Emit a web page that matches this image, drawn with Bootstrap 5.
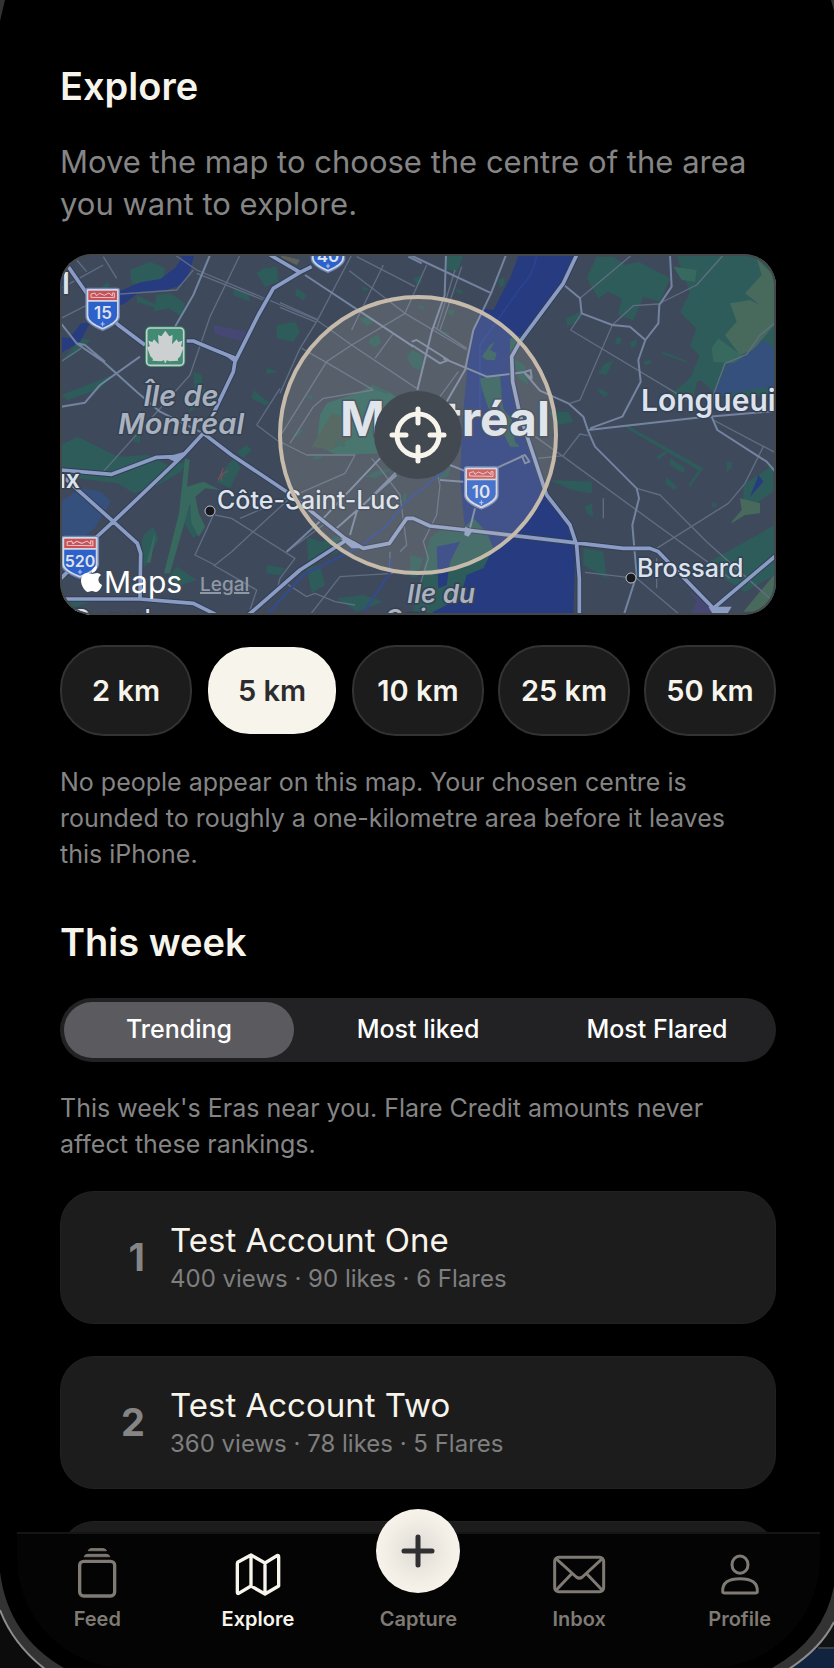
<!DOCTYPE html>
<html lang="en" data-bs-theme="dark">
<head>
<meta charset="utf-8">
<meta name="viewport" content="width=device-width, initial-scale=1">
<title>Explore</title>
<link rel="stylesheet" href="https://cdn.jsdelivr.net/npm/bootstrap@5.3.0/dist/css/bootstrap.min.css">
<script src="https://cdn.jsdelivr.net/npm/bootstrap@5.3.0/dist/js/bootstrap.bundle.min.js"></script>
<style>
  :root { --cream: #f7f4ec; --muted: #858585; --panel: #1c1c1c; --line: #333; }
  body { background: #000; color: var(--cream); font-family: Inter, "Noto Sans", sans-serif; }
  .feed-area { padding: 62px 58px 0 60px; min-height: 0; }
  .title { font-size: 38px; line-height: 48px; font-weight: 600; color: var(--cream); }
  .week { margin-top: 46px; }
  .intro { font-size: 31px; line-height: 42px; color: var(--muted); margin: 31px 0 29px; }
  .note { font-size: 25px; line-height: 36px; color: var(--muted); }
  .map-frame { border-radius: 32px; }
  .map-frame svg { width: 100%; height: auto; }
  .map-frame::after { content: ""; position: absolute; inset: 0; border: 2px solid #45484b; border-radius: 32px; pointer-events: none; }
  .chips { gap: 14px; margin: 30px 0 28px; }
  .chip { flex: 1 1 0; height: 91px; padding: 0; border: 2px solid var(--line); border-radius: 44px; background: var(--panel); color: var(--cream); font-size: 29px; font-weight: 600; }
  .chip.active { background: var(--cream); color: #2c2c2e; border-color: #000; }
  .segments { height: 64px; padding: 4px; gap: 9px; border-radius: 32px; background: #222224; margin: 32px 0 28px; }
  .segment { flex: 1 1 0; border: 0; border-radius: 28px; background: transparent; color: #fff; font-size: 25px; font-weight: 500; }
  .segment.active { background: #5b5b5f; }
  .ranking { gap: 32px; margin-top: 29px; }
  .entry { height: 133px; border-radius: 34px; background: var(--panel); border: 1px solid #212121; gap: 25px; flex-shrink: 0; }
  .rank { width: 84px; text-align: right; font-size: 38px; font-weight: 700; color: var(--muted); }
  .entry-name { font-size: 33px; line-height: 42px; }
  .entry-stats { font-size: 24px; line-height: 36px; color: #7f7f7f; }
  .tabs { height: 136px; margin: 0 14px 0 17px; padding-top: 8px; background: #040404; border-top: 2px solid #151515; border-radius: 0 0 110px 110px; }
  .tab-link { flex: 1 1 0; color: #7f7a73; font-size: 20px; line-height: 24px; font-weight: 600; }
  .tab-link.active { color: var(--cream); }
  .tab-link svg { width: 60px; height: 60px; margin-bottom: 5px; fill: none; stroke: currentColor; stroke-linecap: round; stroke-linejoin: round; }
  .capture { width: 84px; height: 84px; margin: -33px 0 14px; border-radius: 50%; background: radial-gradient(circle, #dfdcd5 0, #f3efe7 55%, #f8f3eb 75%); }
  .tab-link .capture svg { width: 84px; height: 84px; margin: 0; stroke: #303032; }
  .bezel { position: absolute; pointer-events: none; }
</style>
</head>
<body>
<div class="vh-100 d-flex flex-column overflow-hidden position-relative">
  <main class="feed-area flex-grow-1 overflow-hidden d-flex flex-column">
    <h1 class="title mb-0">Explore</h1>
    <p class="intro">Move the map to choose the centre of the area<br>you want to explore.</p>

    <div class="map-frame position-relative overflow-hidden flex-shrink-0">
      <svg class="d-block" viewBox="60 254 716 361" role="img" aria-label="Map of Montréal">
        <defs>
          <g id="shield">
            <path d="M-50 -58q0-6 6-6H44q6 0 6 6V20Q50 42 0 62Q-50 42-50 20Z" fill="#d3d5dc" stroke="#6c87bd" stroke-width="4"/>
            <path d="M-43 -24H43V18Q43 36 0 54Q-43 36-43 18Z" fill="#2d61cc"/>
            <path d="M-43 -57H43V-29H-43Z" fill="#c85056"/>
            <path d="M-35 -37v-10l12-3 4 8 10-7 14 6 14-7 10 9V-50h6v14Z" fill="none" stroke="#e5c8cb" stroke-width="3"/>
            <path d="M0 36v14M-6 43H6" stroke="#b6c9f0" stroke-width="3"/>
          </g>
        </defs>
        <rect x="60" y="254" width="716" height="361" fill="#3e4a5b"/>
        <g transform="translate(50 245) scale(.333333)">
          <!-- parks and green areas, west side -->
          <g fill="#2d5c5b">
            <path d="M240 75l60-25 45 20-5 35-50 15-45-5ZM320 150l40-5 45 30-10 40-40-25-45 10ZM640 70l40-5 5 45-40 15-25-40ZM680 240l55-10 15 30-20 30-50-10ZM33 600l50-25 120 60 90-5 60 30 60-10-20 30-70 40-70 25-50-30-120-15-50-5ZM430 380l25 10 5 40 45 20-10 40-40-15-40 30 20-60ZM540 650l20-10 10 30-30 60-40-20ZM120 170l50-60 10 10-50 70ZM610 435l50 40-15 5-40-20ZM650 370l35 10-35 8ZM560 620l30-20 15 15-25 25ZM33 350l60-70 30 5-60 50ZM33 450l80-30 70-30-30 40-100 35ZM280 870l30-25 15 35-35 80-30 15ZM400 790l40 0 10 70-20 20-30-50ZM770 970l40-10 15 60-40 25ZM380 965l60 40-45 15-40-20ZM650 960l55 10-15 20-40-5ZM740 130l30 20-10 15-25-15ZM550 130l45 20 5 20-50-20ZM250 570l20 0 0 25-20-5ZM33 1080l60-30 30 20-60 20ZM860 1060l80-10 60 20-80 30ZM260 150l50 25 10 15-60-20Z"/>
          </g>
          <path d="M405 640l14 5-8 80 50-15 50 25-45-5-30 25 10 50 20 40-20 30-22-40-4-60-60 210-18 0 45-180ZM290 950l22-80 4 5-15 80Z" fill="#37695f"/>
          <path d="M33 770l60-40 60 10 30 30-50 80-35 30-65-10Z" fill="#36507e"/>
          <path d="M385 32H432l-10 40-20 45-60 20-75 5-45 35-20 5v-40l70-30 60-10 45-35 20-30ZM120 235l-30 55-57 35V275l25 5 35-45Z" fill="#263b80"/>
          <path d="M490 240l100 20-15 28-80-20Z" fill="#464873"/>
          <path d="M690 30l60 15-10 15-45-22Z" fill="#5e6259"/>
          <path d="M520 670l-15 35M535 680q-25 0-20 28" stroke="#735058" stroke-width="4" fill="none"/>
          <!-- Mount Royal and central parks -->
          <path d="M810 510l20-35 100-35 40-20 45 20 95 60v60l-90 30-30 35-130 5-60-30Z" fill="#2f6560"/>
          <path d="M785 605l60-100 50 15 10 60-60 35Z" fill="#3f5753"/>
          <g transform="translate(690 15)" fill="#2d5c5b">
            <path d="M235 205l35-5 10 18-20 10ZM270 265l25-12 10 25-20 15-20-15ZM395 300l35 15-5 45-25-5-20-30ZM480 240l30 10-5 8-25-10ZM505 180l18 0-3 18-15-5ZM530 115l20 10-8 8-15-10ZM415 165l20 5-5 8-15-6ZM245 110l20 5-5 8-15-5ZM400 85l20-8 5 20-15 12ZM655 90l15-8 5 20-15 12ZM280 405l45 20 0 8-45-15ZM80 435l20 5-5 8-15-6ZM40 555l25-18 5 5-20 20Z"/>
            <path d="M170 570l25 10 0 10-35-5ZM105 615l30-5-10 15-30 5ZM255 680l40-20 50-5-60 30ZM460 670l35-5 20-20-10 35-30 10ZM370 735l10-10 0 30-15 0ZM80 860l45 15 60-20-10 50-90 30Z"/>
          </g>

          <g transform="translate(1080 0)">
            <path d="M325 32H500L440 135 330 290 305 330 308 410 335 520 355 570 400 710 412 770 477 830 497 890 490 1115H50L75 1010 70 890 120 860 165 850 150 700 160 500 175 340 195 240 215 190 250 195 300 100Z" fill="#263b80"/>
            <path d="M380 32Q370 90 330 130L210 300V500" fill="none" stroke="#284492" stroke-width="5"/>
            <g fill="#2d5c5b">
              <path d="M530 100l30-65 50 0 35 25 40-10 95 50-30 70-50-15-30 70-45-15 10-50-40-20-30 20ZM800 32h300v420h-180l-60-60 40-30-60-60 20-50-50-50 30-60ZM870 330l60-20 10 70-80 30-10 60-70-20 60-50ZM110 32h50l-20 50-30-10ZM60 880l30-25 60 5 40-40 40 40 20 50-30 60-50 20-20 70-80 40-30 60-30-60ZM520 910l60 10 10 80-70-40ZM210 400l60-10 5 50-15 60-25-10-20-60ZM240 300l15-10-15 25 20 10-5 20-25 0-15-10ZM420 705l125 5v35l-60-10ZM1000 720l90-60v80l-90 60ZM880 960l215-120v150l-90 50ZM0 930l40 10-20 60-20-5ZM415 500l60 0 15 30-45 10ZM470 220l40-20 0 25-40 20Z"/>
              <path d="M580 360l30-15-20 45-25-5ZM620 275l15 5-5 20-15-5ZM660 295l20-15 0 20-15 10ZM755 318l75 30 0 5-70-25ZM740 635l30-20 0 10-25 20ZM780 640l45 30-5 15-40-25ZM770 695l30 30-5 10-30-20ZM905 775l15 0 0 12-15-2ZM950 650l15 0 0 20-15 10ZM700 350l20-5 5 10-20 5ZM565 430l30 15-10 10-20-15ZM525 785l20-10 5 40-20-10Z"/>
              <path d="M650 540l230 130-40 55 30 40-35-45 30-45-215-125Z"/>
              <path d="M300 280l40-10-10 30-30 25ZM310 340l35 20 10 60-30-20ZM285 500l20 20 10 70 15 15-30 0-20-40ZM270 420l10 70 15 30-20-5-10-60Z"/>
            </g>
            <path d="M80 905l70-15-30 60-10 70-25 10Z" fill="#263b80"/>
            <path d="M1040 40l60 60v130l-70 85-40 15-45-60 35-40-20-55 60-10 30 15-45-35 50-55ZM1000 1100l100-120v120ZM965 830l30-35-5-35 60 15 0 30-45 5-40 25Z" fill="#486a5c"/>
            <path d="M950 360l60-30 50-45 40 30v110l-80 10-110 20Z" fill="#36507e"/>
            <path d="M790 65l70 10-5 35-40-5ZM905 310l20-30 75 55-30 20-60-5Z" fill="#37695f"/>
            <path d="M810 1000l30 40 80 50v20h-80l20-40Z" fill="#464873"/>
            <path d="M1045 690l15 20-40 45 20-50Z" fill="#263b80"/>
          </g>

          <!-- minor streets -->
          <g fill="none" stroke="#606d83" stroke-width="4" stroke-linejoin="round">
            <path d="M375 30L440 75 800 225M440 85L640 165M570 30L480 215 420 390 160 680M33 220L170 150 380 135 430 75M80 45l30 35M160 35l40 65M33 350l60-40M33 130L160 60M620 540l60 45 90 45H915L885 685 725 755M620 540L690 430M720 755L570 820M490 810L435 930l60 30 50-40 130-120 50-45M495 810l50 10 190 120-45 60-10 40M490 960l130 75-20 60M700 1010l70 45 25-10 60 25 60 10M820 840L710 920M780 1110l90-115 160-10"/>
            <g transform="translate(690 15)">
              <path d="M0 158L112 208M0 172L110 217M215 15L110 215 60 295 0 430M310 45L215 240M440 45L375 190 215 285 140 335 0 560M65 295L135 335 280 420M208 62L375 190 560 300M110 210L215 285 410 415M340 250L285 325M280 420L130 445 100 470 30 580M230 20L405 110M525 60L470 240M460 230L560 295M545 50L480 240M535 365L480 440"/>
            </g>
            <path d="M965 640l25 30 60 80 20 150-20 20M1160 680l10 40-10 90-40 80 15 50-25 80M1020 920v70"/>
          </g>
          <g transform="translate(1080 0)" fill="none" stroke="#606d83" stroke-width="4" stroke-linejoin="round">
            <path d="M515 205L482 255 850 475M665 30L510 160M607 240L510 465 480 475M607 240L670 182 745 177 860 120 940 30M1100 230L1050 270 1010 328 945 355 910 450 905 515M320 535L460 635 960 1000M385 640L460 632 510 567 535 572M680 730l70 20 140 140 200 180M740 910L955 775 1005 715 1060 605M910 525L1100 625M525 982L680 1000 810 1110M740 940v90M580 820v-60"/>
          </g>

          <!-- secondary roads -->
          <g fill="none" stroke="#74839f" stroke-width="6" stroke-linejoin="round">
            <path d="M480 30L430 150 375 245M33 485L105 473 150 420 270 335M33 235L80 295 160 350 260 440 330 500 460 565M80 295l25 5 60 50M765 90L1090 305M1075 35l40 20M990 640L820 820 710 920M1040 690L860 850 M900 870l20-70 140-140"/>
            <g transform="translate(1080 0)">
              <path d="M108 30L104 150 65 260 22 435M288 30L243 145 190 255 165 375 110 470M0 30L245 145M462 120L510 160 515 205 607 240 660 245 706 285 745 235 748 180 785 125 780 30M706 285L685 345 692 410 637 515 540 550M5 290L20 285 115 345 90 355 5 300M100 340L230 395 340 382 362 375 365 400 345 385 390 437 475 475 520 515 535 560 555 605 680 730 687 760 667 840 680 990 643 1105M535 555L860 518 1100 498M905 515L922 555 1070 650 1100 685M195 790L180 850M225 685L345 630 358 650 345 655 335 630M90 705L160 710M120 660l50 20"/>
            </g>
          </g>

          <!-- canal -->
          <path d="M650 1110L760 990 930 905 1000 850 1080 760 1180 680M1022 940v40l-80 120" fill="none" stroke="#344a8b" stroke-width="7"/>

          <!-- motorways -->
          <g fill="none" stroke="#323e55" stroke-width="17" stroke-linejoin="round">
            <path d="M55 65L110 145 205 240 285 300M410 288H430L555 340M785 65L750 82 670 130 625 210 555 350 550 380 500 485 460 565 400 630 190 830 130 885M660 30L750 82M33 675L185 688 320 637 375 635M45 700L190 830 262 895 272 925 270 1060M33 1062H270L430 1075 500 1110M460 565L545 630 710 740 885 880 940 910 1018 895 1070 820H1090L1140 843 1250 855 1720 910H1800L1825 920 1990 1090 2180 930M890 885L750 975 595 1110M33 1000l80-80M1580 30L1540 115 1410 290 1385 335 1388 410 1410 510 1490 750 1560 840 1580 900 1588 1000 1588 1110"/>
          </g>
          <g fill="none" stroke="#8b9cc4" stroke-width="11" stroke-linejoin="round">
            <path d="M55 65L110 145 205 240 285 300M410 288H430L555 340M785 65L750 82 670 130 625 210 555 350 550 380 500 485 460 565 400 630 190 830 130 885M660 30L750 82M33 675L185 688 320 637 375 635M45 700L190 830 262 895 272 925 270 1060M33 1062H270L430 1075 500 1110M460 565L545 630 710 740 885 880 940 910 1018 895 1070 820H1090L1140 843 1250 855 1720 910H1800L1825 920 1990 1090 2180 930M890 885L750 975 595 1110M33 1000l80-80M1580 30L1540 115 1410 290 1385 335 1388 410 1410 510 1490 750 1560 840 1580 900 1588 1000 1588 1110"/>
          </g>
          <path d="M345 637L405 620 375 650M500 312L560 335 550 350ZM1245 845l25 10-15 20-12-5ZM870 880l45 10 30 20-40 0ZM1975 1085h70l-15 25h-40Z" fill="#8b9cc4"/>

          <use href="#shield" transform="translate(158 194)"/>
          <use href="#shield" transform="translate(834 20)"/>
          <use href="#shield" transform="translate(90 938) scale(1.1 1)"/>
          <use href="#shield" transform="translate(1294 730)"/>

          <rect x="285" y="244" width="121" height="122" rx="15" fill="#2f8064"/>
          <rect x="290" y="249" width="111" height="112" rx="11" fill="#418a73" stroke="#c5d0cd" stroke-width="5"/>
          <path d="M346 257l12 17 10-4-2 28 14-15 5 8 12-4-4 17 8 3-10 27-8 8 2 5-26 2-9-3-2 6h-4l-2-6-9 3-26-2 2-5-8-8-10-27 8-3-4-17 12 4 5-8 14 15-2-28 10 4ZM344 335h4v18h-4Z" fill="#ccd0d0"/>
        </g>

        <g text-anchor="middle" font-weight="600" font-size="17" fill="#dfe2ea">
          <text x="103" y="319">15</text>
          <text x="328" y="262">40</text>
          <text x="80" y="567" font-size="16">520</text>
          <text x="481" y="498">10</text>
        </g>
        <g fill="#dce3ee" stroke="#354153" stroke-width="3" paint-order="stroke" stroke-linejoin="round">
          <text x="445" y="436" font-size="48" font-weight="700" text-anchor="middle">Montréal</text>
          <text x="641" y="411" font-size="30" font-weight="600">Longueui</text>
          <g font-size="25" font-weight="500">
            <text x="217" y="509">Côte-Saint-Luc</text>
            <text x="637" y="577">Brossard</text>
            <text x="80" y="488" text-anchor="end" font-weight="600">ux</text>
            <text x="73" y="628">Dorval</text>
          </g>
          <text x="62" y="294" font-size="30" font-weight="600">l</text>
          <g font-style="italic" font-weight="600" fill="#a9b2be" text-anchor="middle">
            <text x="181" y="406" font-size="29">Île de</text>
            <text x="181" y="434" font-size="29">Montréal</text>
            <text x="441" y="603" font-size="26">Ile du</text>
            <text x="405" y="628" font-size="26">Sai</text>
          </g>
        </g>
        <g fill="#18191d" stroke="#b9c2ce" stroke-width="1">
          <circle cx="210" cy="511" r="5"/>
          <circle cx="631" cy="578" r="5"/>
        </g>

        <!-- search radius and centre marker -->
        <circle cx="418" cy="435" r="138" fill="#fff0d8" fill-opacity=".13" stroke="#c6baab" stroke-width="4"/>
        <circle cx="418" cy="435" r="44" fill="#434951"/>
        <g fill="none" stroke="#f7f4ec" stroke-width="5" stroke-linecap="round">
          <circle cx="418" cy="435" r="21"/>
          <path d="M418 409v14M418 447v14M392 435h14M430 435h14"/>
        </g>

        <path d="M92 574c2 0 3-1 5-1 2 0 3 1 4 2-4 3-3 8 1 10-1 4-4 7-6 7-2 0-2-1-4-1-2 0-3 1-4 1-3 0-7-7-7-11 0-5 3-8 6-8 2 0 3 1 5 1ZM92 573c0-4 2-6 5-7 0 4-2 6-5 7Z" fill="#fff"/>
        <text x="104" y="593" font-size="30" font-weight="400" fill="#fff">Maps</text>
        <a href="#legal"><text x="200" y="591" font-size="19" font-weight="500" fill="#8f98a5" text-decoration="underline">Legal</text></a>
      </svg>
    </div>

    <div class="chips d-flex flex-shrink-0" role="group" aria-label="Radius">
      <button type="button" class="chip">2 km</button>
      <button type="button" class="chip active" aria-pressed="true">5 km</button>
      <button type="button" class="chip">10 km</button>
      <button type="button" class="chip">25 km</button>
      <button type="button" class="chip">50 km</button>
    </div>
    <p class="note mb-0">No people appear on this map. Your chosen centre is<br>rounded to roughly a one-kilometre area before it leaves<br>this iPhone.</p>

    <h2 class="title week mb-0">This week</h2>
    <div class="segments d-flex flex-shrink-0" role="group" aria-label="Ranking">
      <button type="button" class="segment active" aria-pressed="true">Trending</button>
      <button type="button" class="segment">Most liked</button>
      <button type="button" class="segment">Most Flared</button>
    </div>
    <p class="note mb-0">This week's Eras near you. Flare Credit amounts never<br>affect these rankings.</p>

    <div class="ranking d-flex flex-column">
      <article class="entry d-flex align-items-center">
        <div class="rank">1</div>
        <div><div class="entry-name">Test Account One</div><div class="entry-stats">400 views · 90 likes · 6 Flares</div></div>
      </article>
      <article class="entry d-flex align-items-center">
        <div class="rank">2</div>
        <div><div class="entry-name">Test Account Two</div><div class="entry-stats">360 views · 78 likes · 5 Flares</div></div>
      </article>
      <article class="entry"></article>
    </div>
  </main>

  <nav class="tabs d-flex flex-shrink-0 position-relative" aria-label="Main">
    <a href="#feed" class="tab-link d-flex flex-column align-items-center text-decoration-none">
      <svg viewBox="0 0 180 180" stroke-width="10"><rect x="38" y="58" width="105" height="104" rx="12"/><path d="M52 43q2-6 10-6h56q8 0 10 6ZM64 25q2-5 8-5h36q8 0 10 5Z" fill="currentColor" stroke-width="3"/></svg>
      Feed
    </a>
    <a href="#explore" class="tab-link active d-flex flex-column align-items-center text-decoration-none" aria-current="page">
      <svg viewBox="0 0 180 180" stroke-width="10"><path d="M29 61L69 39 111 63 147 41Q152 39 152 45V132L111 156 69 132 32 154Q28 156 28 150V65ZM69 39V132M111 63V156"/></svg>
      Explore
    </a>
    <a href="#capture" class="tab-link d-flex flex-column align-items-center text-decoration-none">
      <span class="capture d-block"><svg class="d-block" viewBox="0 0 84 84" stroke-width="5"><path d="M42 28v28M28 42h28"/></svg></span>
      Capture
    </a>
    <a href="#inbox" class="tab-link d-flex flex-column align-items-center text-decoration-none">
      <svg viewBox="0 0 180 180" stroke-width="9"><rect x="17" y="46" width="147" height="103" rx="12"/><path d="M21 50L82 105Q91 112 100 105L160 50M21 145L68 95M160 145L113 95"/></svg>
      Inbox
    </a>
    <a href="#profile" class="tab-link d-flex flex-column align-items-center text-decoration-none">
      <svg viewBox="0 0 180 180" stroke-width="9"><ellipse cx="90" cy="68" rx="24" ry="26"/><path d="M38 148Q37 110 90 110T142 148Q142 153 136 153H44Q38 153 38 148Z"/></svg>
      Profile
    </a>
  </nav>

  <!-- rounded edges of the device -->
  <svg class="bezel top-0 start-0" width="6" height="22" aria-hidden="true"><path d="M0 0H5L0 21Z" fill="#333"/></svg>
  <svg class="bezel top-0 end-0" width="4" height="12" aria-hidden="true"><path d="M4 0H1L4 11Z" fill="#333"/></svg>
  <svg class="bezel bottom-0 start-0" width="66" height="100" viewBox="0 0 66 100" aria-hidden="true"><path d="M0 4Q8 68 64 100H0Z" fill="#333"/><path d="M0 42Q13 76 45 100H0Z" fill="#0c0c0c"/><path d="M0 42Q13 76 45 101" fill="none" stroke="#8d8d90" stroke-width="2"/></svg>
  <svg class="bezel bottom-0 end-0" width="66" height="100" viewBox="0 0 66 100" aria-hidden="true"><path d="M66 18Q56 71 4 100H66Z" fill="#333"/><path d="M66 54Q53 80 23 100H66Z" fill="#101214"/><path d="M46 81H66V100H24Z" fill="#12233f"/><path d="M50 80H66" stroke="#3a3d42" stroke-width="2"/><path d="M66 54Q53 80 21 101" fill="none" stroke="#8d8d90" stroke-width="2"/></svg>
</div>
</body>
</html>
